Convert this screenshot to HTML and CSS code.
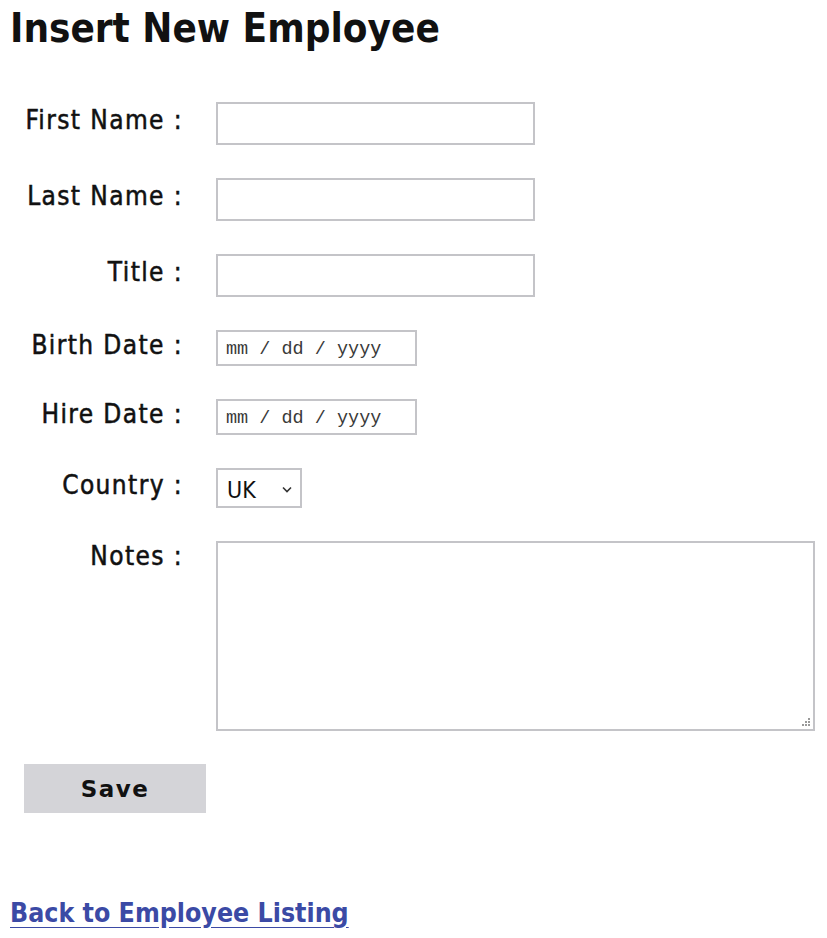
FILE: index.html
```html
<!DOCTYPE html>
<html lang="en">
<head>
<meta charset="utf-8">
<title>Insert New Employee</title>
<link rel="stylesheet" href="styles.css">
</head>
<body>
<h1 class="title">Insert New Employee</h1>
<form class="form">
  <label class="label" for="first">First Name :</label>
  <input class="text-input" id="first" type="text">

  <label class="label" for="last">Last Name :</label>
  <input class="text-input" id="last" type="text">

  <label class="label" for="jobtitle">Title :</label>
  <input class="text-input" id="jobtitle" type="text">

  <label class="label" for="birth">Birth Date :</label>
  <input class="date-input" id="birth" type="text" placeholder="mm / dd / yyyy">

  <label class="label" for="hire">Hire Date :</label>
  <input class="date-input" id="hire" type="text" placeholder="mm / dd / yyyy">

  <label class="label" for="country">Country :</label>
  <div class="select-wrap">
    <select class="select" id="country">
      <option>UK</option>
      <option>USA</option>
    </select>
    <svg class="chevron" width="10" height="7" viewBox="0 0 10 7"><path d="M1 1.5 L5 5.5 L9 1.5" fill="none" stroke="#333" stroke-width="1.6"/></svg>
  </div>

  <label class="label label-top" for="notes">Notes :</label>
  <div class="notes-wrap">
    <textarea class="notes" id="notes"></textarea>
    <svg class="grip" width="10" height="10" viewBox="0 0 10 10">
      <rect x="7" y="1" width="2" height="2" fill="#999"/>
      <rect x="4" y="4" width="2" height="2" fill="#999"/>
      <rect x="7" y="4" width="2" height="2" fill="#999"/>
      <rect x="1" y="7" width="2" height="2" fill="#999"/>
      <rect x="4" y="7" width="2" height="2" fill="#999"/>
      <rect x="7" y="7" width="2" height="2" fill="#999"/>
    </svg>
  </div>
</form>
<div class="actions">
  <button class="save" type="button">Save</button>
</div>
<a class="back" href="#">Back to Employee Listing</a>
</body>
</html>
```
FILE: styles.css
```css
html, body {
  margin: 0;
  padding: 0;
  background: #fff;
}
body {
  padding: 0 10px;
  font-family: "DejaVu Sans", sans-serif;
  font-stretch: condensed;
  color: #111;
}
.title {
  margin: 0;
  padding-top: 4px;
  font-size: 40px;
  line-height: 48px;
  font-weight: bold;
  letter-spacing: 0;
}
.form {
  display: grid;
  grid-template-columns: 173px auto;
  column-gap: 33px;
  row-gap: 33px;
  align-items: center;
  justify-items: start;
  margin-top: 50px;
}
.label {
  justify-self: end;
  font-size: 26px;
  line-height: 30px;
  letter-spacing: 1.4px;
  -webkit-text-stroke: 0.5px #111;
  margin-top: -7px;
  white-space: nowrap;
}
.label-top {
  align-self: start;
  margin-top: 0;
}
.text-input {
  box-sizing: border-box;
  width: 319px;
  height: 43px;
  border: 2px solid #c4c4c8;
  border-radius: 0;
  outline: none;
  background: #fff;
}
.date-input {
  box-sizing: border-box;
  width: 201px;
  height: 36px;
  border: 2px solid #c4c4c8;
  padding: 2px 8px 0;
  font-family: "Liberation Mono", monospace;
  font-size: 18.5px;
  color: #333;
}
.date-input::placeholder {
  color: #3a3a3a;
}
.select-wrap {
  position: relative;
}
.select {
  appearance: none;
  -webkit-appearance: none;
  box-sizing: border-box;
  width: 86px;
  height: 40px;
  border: 2px solid #c4c4c8;
  border-radius: 0;
  background: #fff;
  padding: 4px 0 0 9px;
  font-family: "DejaVu Sans", sans-serif;
  font-stretch: condensed;
  font-size: 23px;
  color: #111;
}
.chevron {
  position: absolute;
  right: 10px;
  top: 18px;
  pointer-events: none;
}
.notes-wrap {
  position: relative;
  line-height: 0;
}
.notes {
  box-sizing: border-box;
  width: 599px;
  height: 190px;
  border: 2px solid #c4c4c8;
  margin: 0;
  resize: none;
}
.grip {
  position: absolute;
  right: 4px;
  bottom: 4px;
}
.actions {
  margin-top: 33px;
  padding-left: 14px;
}
.save {
  width: 182px;
  height: 49px;
  border: none;
  background: #d4d4d8;
  font-family: "DejaVu Sans", sans-serif;
  font-weight: bold;
  font-size: 23px;
  letter-spacing: 1.5px;
  color: #111;
  padding: 0;
}
.back {
  display: inline-block;
  margin-top: 84px;
  font-size: 26.5px;
  font-weight: bold;
  color: #3b4aa5;
  text-decoration: underline;
  text-decoration-thickness: 3px;
  text-underline-offset: 5px;
}
```
